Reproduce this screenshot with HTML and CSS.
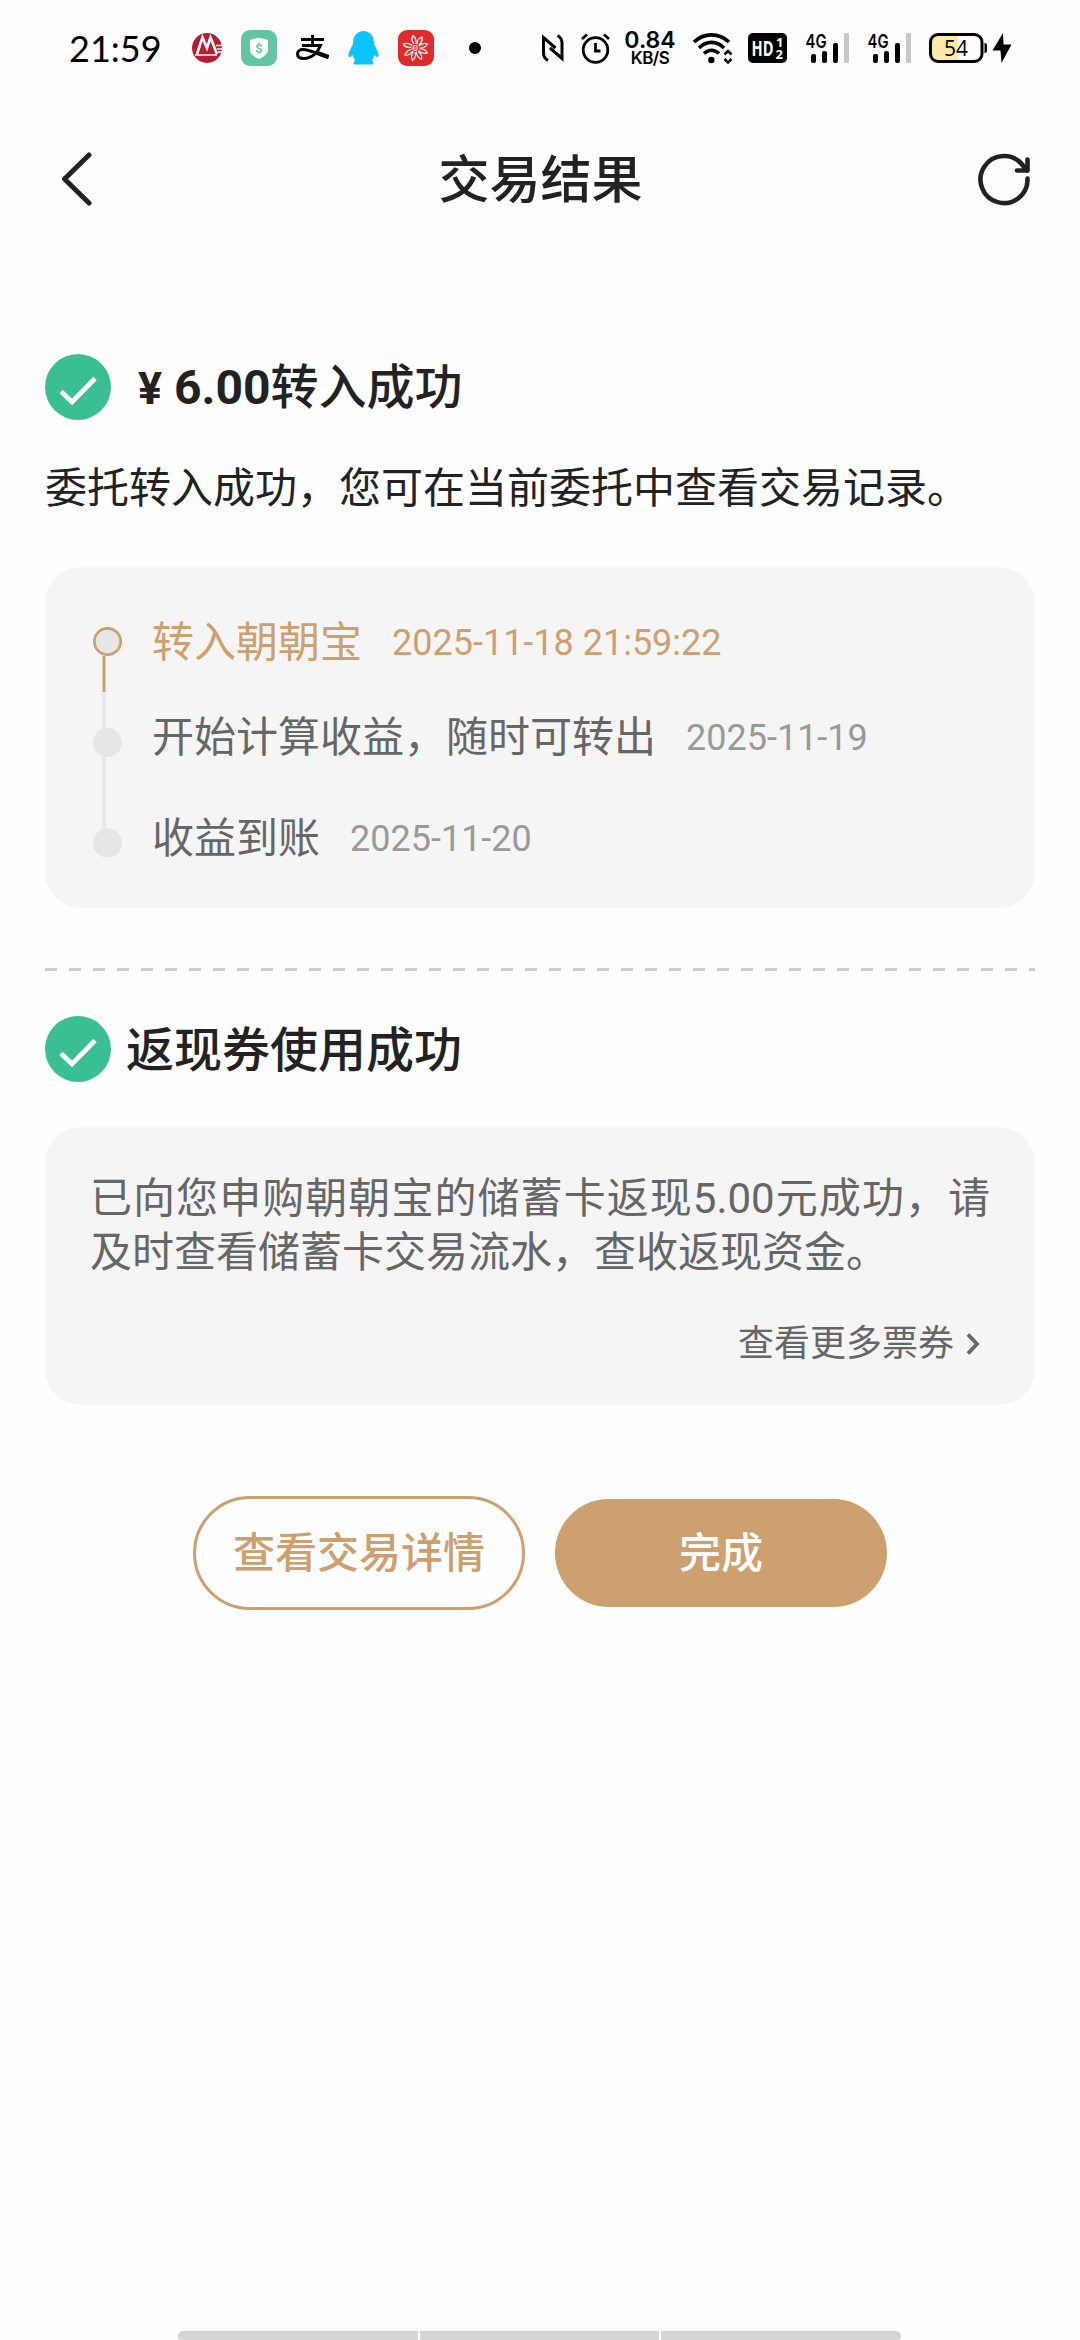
FILE: index.html
```html
<!DOCTYPE html>
<html lang="zh-CN">
<head>
<meta charset="utf-8">
<title>交易结果</title>
<link rel="stylesheet" href="styles.css">
</head>
<body>
<div class="screen">
  <div class="status">
    <div class="status-left">
      <span class="clock">21:59</span>
      <svg class="ic" width="30" height="30" viewBox="0 0 30 30">
        <circle cx="15" cy="15" r="15" fill="#b81c33"/>
        <path d="M5 21L10.5 4.5L15 15L18.5 4.5L25 21" fill="none" stroke="#fff" stroke-width="2.6"/>
        <path d="M3 22H25M24 12.500H30M25 16H30M26 19H30" stroke="#fff" stroke-width="1.400"/>
        <path d="M10.500 12V21M18.500 12V21" stroke="#b81c33" stroke-width="3"/>
      </svg>
      <svg class="ic ic-shield" width="36" height="36" viewBox="0 0 36 36">
        <rect width="36" height="36" rx="9" fill="#62c6a3"/>
        <path d="M18 7.500L27 10V20Q27 25 18 29Q9 25 9 20V10Z" fill="#fff"/>
        <text x="18" y="22.500" class="shield-t">$</text>
      </svg>
      <svg class="ic ic-pay" width="34" height="26" viewBox="0 0 34 26" fill="none" stroke="#000">
        <path d="M5 4.500H28M16.500 0V10" stroke-width="3"/>
        <path d="M6 10.500H24.500C22 17 16 23.500 8 23.500C3 23.500 1.500 21 1.500 19C1.500 16 4 14.500 7 14.500C14 14.500 22 19.500 32.500 22.500" stroke-width="3"/>
        <path d="M20 17.500L32.500 22" stroke-width="4"/>
      </svg>
      <svg class="ic ic-qq" width="31" height="34" viewBox="0 0 31 34">
        <path d="M15.500 0C9 0 5 5 5 12C4.500 16 0 20 .5 25C1 27 3 26 4.500 24Q5.500 27 7 29.500C5 31 5 33.500 7 33.500H24C26 33.500 26 31 24 29.500Q25.500 27 26.500 24C28 26 30 27 30.500 25C31 20 26.500 16 26 12C26 5 22 0 15.500 0Z" fill="#0cc4fd"/>
      </svg>
      <svg class="ic ic-red" width="36" height="36" viewBox="0 0 36 36">
        <rect width="36" height="36" rx="9" fill="#de2b2b"/>
        <g fill="none" stroke="#fff" stroke-width="1.200">
          <path id="p" d="M16 14C13.500 11 13.500 8 15 5.500C18 8 18.500 11 18 14"/>
          <use href="#p" transform="rotate(42 17.500 18)"/><use href="#p" transform="rotate(83 17.500 18)"/>
          <use href="#p" transform="rotate(124 17.500 18)"/><use href="#p" transform="rotate(163 17.500 18)"/>
          <use href="#p" transform="rotate(205 17.500 18)"/><use href="#p" transform="rotate(247 17.500 18)"/>
          <use href="#p" transform="rotate(300 17.500 18)"/>
          <path d="M19.500 16.500A2.500 2.500 0 1 0 19.500 19.500M16.500 18H20"/>
        </g>
      </svg>
      <span class="dot"></span>
    </div>
    <div class="status-right">
      <svg width="22" height="28" viewBox="0 0 22 28" fill="none" stroke="#000" stroke-width="3">
        <path d="M6 26.500Q1.500 24 1.500 19V3.500L13.500 14"/>
        <path d="M15.500 1.500Q20 4 20 9V24.500L8 14"/>
      </svg>
      <svg class="ic-alarm" width="29" height="31" viewBox="0 0 29 31" fill="none" stroke="#000" stroke-width="2.800">
        <circle cx="14.500" cy="17" r="12.300"/><path d="M14.500 10V18H19.500M1 6L6 1.500M28 6L23 1.500"/>
      </svg>
      <div class="speed"><span class="speed-n">0.84</span><span class="speed-u">KB/S</span></div>
      <svg class="ic-wifi" width="40" height="31" viewBox="0 0 40 31" fill="none" stroke="#000" stroke-width="3.600">
        <path d="M1 9C11 -.5 26 -.5 36 9M6 15C13.500 7.500 23.500 7.500 31 15M11 20.500Q18.500 14 26 20.500"/>
        <circle cx="18.300" cy="27" r="3.200" fill="#000" stroke="none"/>
        <path d="M31.500 21.500L35 18L38.500 21.500M31.500 26L35 29.500L38.500 26" stroke-width="2.500"/>
      </svg>
      <svg class="ic-hd" width="39" height="30" viewBox="0 0 39 30">
        <rect width="39" height="30" rx="5"/>
        <text x="3.500" y="23" class="hd-t" textLength="22" lengthAdjust="spacingAndGlyphs">HD</text>
        <text x="28" y="14" class="hd-s">1</text><text x="27.500" y="26" class="hd-s">2</text>
      </svg>
      <svg class="ic-sig" width="45" height="30" viewBox="0 0 45 30">
        <text x="0.500" y="14.500" class="sig-t" textLength="21" lengthAdjust="spacingAndGlyphs">4G</text>
        <rect x="6" y="21" width="5" height="9" rx="2"/><rect x="17" y="18" width="5" height="12" rx="2"/><rect x="28" y="10" width="5" height="20" rx="2"/><rect x="39" y="0" width="5" height="30" rx="1" fill="#c8c8c8"/>
      </svg>
      <svg class="ic-sig2" width="45" height="30" viewBox="0 0 45 30">
        <text x="0.500" y="14.500" class="sig-t" textLength="21" lengthAdjust="spacingAndGlyphs">4G</text>
        <rect x="6" y="21" width="5" height="9" rx="2"/><rect x="17" y="18" width="5" height="12" rx="2"/><rect x="28" y="10" width="5" height="20" rx="2"/><rect x="39" y="0" width="5" height="30" rx="1" fill="#c8c8c8"/>
      </svg>
      <svg class="ic-bat" width="83" height="30" viewBox="0 0 83 30">
        <path d="M29 1.500H8.500Q1.500 1.500 1.500 8.500V21.500Q1.500 28.500 8.500 28.500H29Z" fill="#ffe9a6"/>
        <rect x="1.500" y="1.500" width="51.500" height="27" rx="7.500" fill="none" stroke="#000" stroke-width="3"/>
        <path d="M55.500 10Q58 10 58 12V18Q58 20 55.500 20Z"/>
        <text x="27" y="22.500" class="bat-t">54</text>
        <path d="M74 0L63.500 17.500H71.500L72.500 30L82.500 11.500H74.500Z"/>
      </svg>
    </div>
  </div>

  <header class="nav">
    <svg width="32" height="54" viewBox="0 0 32 54" fill="none" stroke="#222" stroke-width="5" stroke-linecap="round" stroke-linejoin="round"><path d="M28 3L3.500 27L28 51"/></svg>
    <h1 class="nav-title">交易结果</h1>
    <svg width="54" height="54" viewBox="0 0 54 54" fill="none" stroke="#222" stroke-width="4.600" stroke-linecap="round" stroke-linejoin="round"><path d="M50.500 26.500A23.500 23.500 0 1 1 45.500 13L50 18.500"/><path d="M50.500 7.500V18.500H40"/></svg>
  </header>

  <main class="content">
    <section class="head head-first">
      <svg width="66" height="66" viewBox="0 0 66 66"><circle cx="33" cy="33" r="33" fill="#3abf94"/><path d="M16 37.500L27 48L50 24.500" fill="none" stroke="#fff" stroke-width="4.800"/></svg>
      <h2 class="head-title"><span class="yen">¥</span><span class="amount">6.00</span>转入成功</h2>
    </section>
    <p class="desc">委托转入成功，您可在当前委托中查看交易记录。</p>

    <ol class="card steps">
      <li class="step step-on"><span class="step-text">转入朝朝宝</span><span class="step-date">2025-11-18 21:59:22</span></li>
      <li class="step"><span class="step-text">开始计算收益，随时可转出</span><span class="step-date">2025-11-19</span></li>
      <li class="step"><span class="step-text">收益到账</span><span class="step-date">2025-11-20</span></li>
      <li class="rail" aria-hidden="true">
        <svg width="30" height="231" viewBox="0 0 30 231">
          <path d="M11 66V202" stroke="#e6e6e6" stroke-width="3"/>
          <path d="M11 29V65" stroke="#cca06f" stroke-width="3"/>
          <circle cx="14.500" cy="14.500" r="13.200" fill="#e6e6e6" stroke="#cca06f" stroke-width="2.800"/>
          <circle cx="14.500" cy="115.500" r="14.500" fill="#e6e6e6"/>
          <circle cx="14.500" cy="216" r="14.500" fill="#e6e6e6"/>
        </svg>
      </li>
    </ol>

    <div class="divider"></div>

    <section class="head">
      <svg width="66" height="66" viewBox="0 0 66 66"><circle cx="33" cy="33" r="33" fill="#3abf94"/><path d="M16 37.500L27 48L50 24.500" fill="none" stroke="#fff" stroke-width="4.800"/></svg>
      <h2 class="head-title">返现券使用成功</h2>
    </section>
    <section class="card coupon">
      <p class="coupon-text">已向您申购朝朝宝的储蓄卡返现5.00元成功，请及时查看储蓄卡交易流水，查收返现资金。</p>
      <a class="more">查看更多票券<svg width="14" height="22" viewBox="0 0 14 22" fill="none" stroke="#666" stroke-width="3.800"><path d="M2 1.500L11 11L2 20.500"/></svg></a>
    </section>

    <div class="actions">
      <button class="btn btn-line">查看交易详情</button>
      <button class="btn btn-fill">完成</button>
    </div>
  </main>
  <div class="gesture"><i></i><i></i><i></i></div>
</div>
</body>
</html>
```
FILE: styles.css
```css
* { box-sizing: border-box; }
body {
  margin: 0;
  background: #fefefe;
  color: #222;
  font-family: Roboto, "Noto Sans CJK SC", sans-serif;
}
h1, h2, p, ol { margin: 0; padding: 0; font-weight: 400; }
svg { display: block; flex: none; }

.screen {
  display: flex;
  flex-direction: column;
  width: 1080px;
  height: 2340px;
  overflow: hidden;
}

/* status bar */
.status {
  display: flex;
  justify-content: space-between;
  height: 96px;
  padding: 0 68px 0 69px;
  color: #000;
}
.status-left, .status-right { display: flex; align-items: center; }
.clock {
  width: 123px;
  font: 400 36px/40px Lato, sans-serif;
}
.ic-shield { margin-left: 19px; }
.ic-pay { margin-left: 19px; }
.ic-qq { margin-left: 18px; }
.ic-red { margin-left: 19px; }
.dot { width: 12px; height: 12px; margin-left: 35px; border-radius: 50%; background: #000; }
.ic-alarm { margin-left: 17px; }
.speed {
  display: flex;
  flex-direction: column;
  align-items: center;
  width: 52px;
  margin-left: 14px;
  font-family: Inter, sans-serif;
}
.speed-n { font-size: 23px; font-weight: 600; line-height: 20px; }
.speed-u { font-size: 17px; font-weight: 600; line-height: 17px; letter-spacing: -0.6px; }
.ic-wifi { margin-left: 17px; }
.ic-hd { margin-left: 15px; }
.ic-sig { margin-left: 18px; }
.ic-sig2 { margin-left: 17px; }
.ic-bat { margin-left: 17px; }
.shield-t { font: 700 13px Roboto, sans-serif; fill: #62c6a3; text-anchor: middle; }
.hd-t { font: 700 22px "Open Sans", sans-serif; fill: #fff; }
.hd-s { font: 700 13px "Open Sans", sans-serif; fill: #fff; }
.sig-t { font: 600 19px Inter, sans-serif; }
.bat-t { font: 400 21px "Open Sans", sans-serif; text-anchor: middle; }

/* navigation */
.nav {
  display: flex;
  align-items: center;
  justify-content: space-between;
  height: 166px;
  padding: 0 49px 0 61px;
}
.nav-title {
  margin-left: 11px;
  padding-top: 4px;
  font-size: 51px;
  font-weight: 500;
  line-height: 72px;
}

.content { padding: 0 45px; }

.head { display: flex; align-items: center; gap: 15px; height: 66px; }
.head-first { margin-top: 92px; }
.head-title { padding-top: 3px; font-size: 48px; font-weight: 500; line-height: 66px; }
.yen { display: inline-block; width: 48px; font-size: 45px; font-weight: 700; text-align: center; }
.amount { font-weight: 700; }
.desc { margin-top: 39px; font-size: 42px; line-height: 60px; white-space: nowrap; }

.card { border-radius: 36px; background: #f5f5f5; }

/* progress */
.steps {
  display: grid;
  grid-template-columns: 30px 1fr;
  grid-template-rows: 95px 101px 100px;
  column-gap: 29px;
  height: 341px;
  margin-top: 48px;
  padding: 28px 48px 0;
  list-style: none;
}
.step {
  grid-column: 2;
  display: flex;
  align-items: baseline;
  gap: 30px;
  line-height: 96px;
  color: #999;
  white-space: nowrap;
}
.step-text { font-size: 42px; color: #666; }
.step-date { margin-bottom: 2px; font-size: 36px; transform: translateY(-2px); }
.step-on, .step-on .step-text { color: #cca06f; }
.rail { grid-column: 1; grid-row: 1 / 4; padding-top: 32px; }

.divider {
  height: 3px;
  margin: 60px 0 45px;
  background: repeating-linear-gradient(90deg, #ccc 0 12px, transparent 12px 24px);
}

/* coupon */
.coupon {
  height: 278px;
  margin-top: 45px;
  padding: 45px 45px 0;
  color: #666;
}
.coupon-text { font-size: 42px; line-height: 54px; text-align: justify; }
.more {
  display: flex;
  align-items: center;
  justify-content: flex-end;
  gap: 12px;
  margin: 37px 10px 0 0;
  font-size: 36px;
  line-height: 54px;
}

/* buttons */
.actions {
  display: flex;
  align-items: center;
  justify-content: center;
  gap: 30px;
  margin-top: 91px;
}
.btn {
  width: 332px;
  height: 108px;
  padding: 1px 0 0;
  border: 0;
  border-radius: 57px;
  font: 500 42px/60px Roboto, "Noto Sans CJK SC", sans-serif;
}
.btn-line { height: 114px; border: 3px solid #cca06f; background: transparent; color: #cca06f; }
.btn-fill { background: #cca06f; color: #fff; }

.gesture {
  display: flex;
  gap: 2px;
  width: 723px;
  height: 9px;
  margin: auto auto 0 178px;
  overflow: hidden;
  border-radius: 5px 5px 3px 3px;
}
.gesture i { flex: 1; background: #d5d5d5; }
```
